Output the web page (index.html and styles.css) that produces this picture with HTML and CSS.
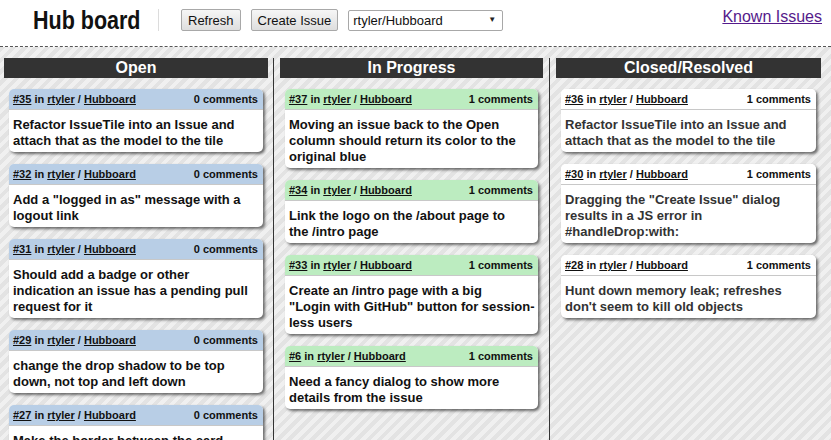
FILE: index.html
```html
<!DOCTYPE html>
<html>
<head>
<meta charset="utf-8">
<title>Hub board</title>
<link rel="stylesheet" href="styles.css">
</head>
<body>
<header class="topbar">
  <h1 class="logo">Hub board</h1>
  <span class="sep"></span>
  <div class="controls">
    <button class="btn">Refresh</button>
    <button class="btn">Create Issue</button>
    <span class="select-wrap">
      <select class="repo-select"><option>rtyler/Hubboard</option></select>
      <span class="select-arrow">▼</span>
    </span>
  </div>
  <a class="known" href="#">Known Issues</a>
</header>
<main class="board">
  <section class="column col-open">
    <h2 class="col-title">Open</h2>
    <div class="card open">
      <div class="card-head"><span><a href="#">#35</a> in <a href="#">rtyler</a> / <a href="#">Hubboard</a></span><span>0 comments</span></div>
      <div class="card-body">Refactor IssueTile into an Issue and<br>attach that as the model to the tile</div>
    </div>
    <div class="card open">
      <div class="card-head"><span><a href="#">#32</a> in <a href="#">rtyler</a> / <a href="#">Hubboard</a></span><span>0 comments</span></div>
      <div class="card-body">Add a "logged in as" message with a<br>logout link</div>
    </div>
    <div class="card open">
      <div class="card-head"><span><a href="#">#31</a> in <a href="#">rtyler</a> / <a href="#">Hubboard</a></span><span>0 comments</span></div>
      <div class="card-body">Should add a badge or other<br>indication an issue has a pending pull<br>request for it</div>
    </div>
    <div class="card open">
      <div class="card-head"><span><a href="#">#29</a> in <a href="#">rtyler</a> / <a href="#">Hubboard</a></span><span>0 comments</span></div>
      <div class="card-body">change the drop shadow to be top<br>down, not top and left down</div>
    </div>
    <div class="card open">
      <div class="card-head"><span><a href="#">#27</a> in <a href="#">rtyler</a> / <a href="#">Hubboard</a></span><span>0 comments</span></div>
      <div class="card-body">Make the border between the card<br>header and body less harsh</div>
    </div>
  </section>
  <section class="column col-progress">
    <h2 class="col-title">In Progress</h2>
    <div class="card progress">
      <div class="card-head"><span><a href="#">#37</a> in <a href="#">rtyler</a> / <a href="#">Hubboard</a></span><span>1 comments</span></div>
      <div class="card-body">Moving an issue back to the Open<br>column should return its color to the<br>original blue</div>
    </div>
    <div class="card progress">
      <div class="card-head"><span><a href="#">#34</a> in <a href="#">rtyler</a> / <a href="#">Hubboard</a></span><span>1 comments</span></div>
      <div class="card-body">Link the logo on the /about page to<br>the /intro page</div>
    </div>
    <div class="card progress">
      <div class="card-head"><span><a href="#">#33</a> in <a href="#">rtyler</a> / <a href="#">Hubboard</a></span><span>1 comments</span></div>
      <div class="card-body">Create an /intro page with a big<br>"Login with GitHub" button for session-<br>less users</div>
    </div>
    <div class="card progress">
      <div class="card-head"><span><a href="#">#6</a> in <a href="#">rtyler</a> / <a href="#">Hubboard</a></span><span>1 comments</span></div>
      <div class="card-body">Need a fancy dialog to show more<br>details from the issue</div>
    </div>
  </section>
  <section class="column col-closed">
    <h2 class="col-title">Closed/Resolved</h2>
    <div class="card closed">
      <div class="card-head"><span><a href="#">#36</a> in <a href="#">rtyler</a> / <a href="#">Hubboard</a></span><span>1 comments</span></div>
      <div class="card-body">Refactor IssueTile into an Issue and<br>attach that as the model to the tile</div>
    </div>
    <div class="card closed">
      <div class="card-head"><span><a href="#">#30</a> in <a href="#">rtyler</a> / <a href="#">Hubboard</a></span><span>1 comments</span></div>
      <div class="card-body">Dragging the "Create Issue" dialog<br>results in a JS error in<br>#handleDrop:with:</div>
    </div>
    <div class="card closed">
      <div class="card-head"><span><a href="#">#28</a> in <a href="#">rtyler</a> / <a href="#">Hubboard</a></span><span>1 comments</span></div>
      <div class="card-body">Hunt down memory leak; refreshes<br>don't seem to kill old objects</div>
    </div>
  </section>
</main>
</body>
</html>
```
FILE: styles.css
```css
* { box-sizing: border-box; }
html, body { margin: 0; padding: 0; height: 100%; overflow: hidden; }
body {
  font-family: "Liberation Sans", Arial, sans-serif;
  color: #111;
  background: #fff;
}
.topbar {
  display: flex;
  align-items: center;
  height: 47px;
  padding: 0 9px 6px 33px;
  border-bottom: 1px dashed #555;
}
.logo {
  margin: 0 -15px 0 0;
  display: inline-block;
  font-family: "Liberation Sans", Arial, sans-serif;
  font-size: 25px;
  font-weight: bold;
  color: #111;
  line-height: 24px;
  transform: scaleX(0.86);
  transform-origin: left center;
  white-space: nowrap;
}
.sep {
  width: 1px;
  height: 22px;
  margin-left: 15px;
  background: #dcdcdc;
}
.controls {
  display: flex;
  align-items: center;
  gap: 10px;
  margin-left: 22px;
}
.btn {
  font-family: "Liberation Sans", Arial, sans-serif;
  font-size: 13px;
  height: 22px;
  padding: 0 6px;
  border: 1px solid #a8a8a8;
  border-radius: 2px;
  background: linear-gradient(#f6f6f6, #dedede);
  color: #111;
}
.select-wrap { position: relative; display: inline-block; }
.repo-select {
  -webkit-appearance: none;
  appearance: none;
  width: 155px;
  height: 21px;
  font-family: "Liberation Sans", Arial, sans-serif;
  font-size: 13px;
  padding: 0 4px;
  border: 1px solid #a8a8a8;
  border-radius: 2px;
  background: #fff;
  color: #111;
}
.select-arrow {
  position: absolute;
  right: 7px;
  top: 5px;
  font-size: 8px;
  color: #222;
  pointer-events: none;
}
.known {
  margin-left: auto;
  font-size: 16px;
  color: #551a8b;
  margin-top: -6px;
}
.board {
  display: flex;
  height: calc(100% - 47px);
  padding: 11px 10px 0 4px;
  background: repeating-linear-gradient(135deg, #e3e3e3 0 4px, #f0f0f0 4px 8px);
}
.column {
  min-width: 0;
  padding: 0 5px 0 6px;
  border-left: 1px solid #333;
}
.col-open { flex: 0 0 269px; border-left: 0; padding-left: 0; }
.col-progress { flex: 0 0 276px; padding-right: 6px; }
.col-closed { flex: 1 1 0; padding-right: 0; }
.col-title {
  margin: 0 0 11px;
  height: 20px;
  line-height: 20px;
  background: #333;
  color: #fff;
  text-align: center;
  font-size: 16px;
  font-weight: bold;
}
.card {
  margin: 0 5px 12px;
  background: #fff;
  border-radius: 5px;
  box-shadow: 2px 2px 3px rgba(0,0,0,0.55);
  overflow: hidden;
}
.card-head {
  display: flex;
  justify-content: space-between;
  height: 21px;
  line-height: 20px;
  padding: 0 5px 0 4px;
  font-size: 11px;
  font-weight: bold;
  border-bottom: 1px solid #c8c8c8;
}
.card-head a { color: #111; }
.open .card-head { background: #b8cee6; }
.progress .card-head { background: #bcecc0; }
.closed .card-head { background: #fff; }
.card-body {
  padding: 7px 4px 3px;
  font-size: 13px;
  font-weight: bold;
  line-height: 16px;
  white-space: nowrap;
}
.closed .card-body { color: #333; }
```
